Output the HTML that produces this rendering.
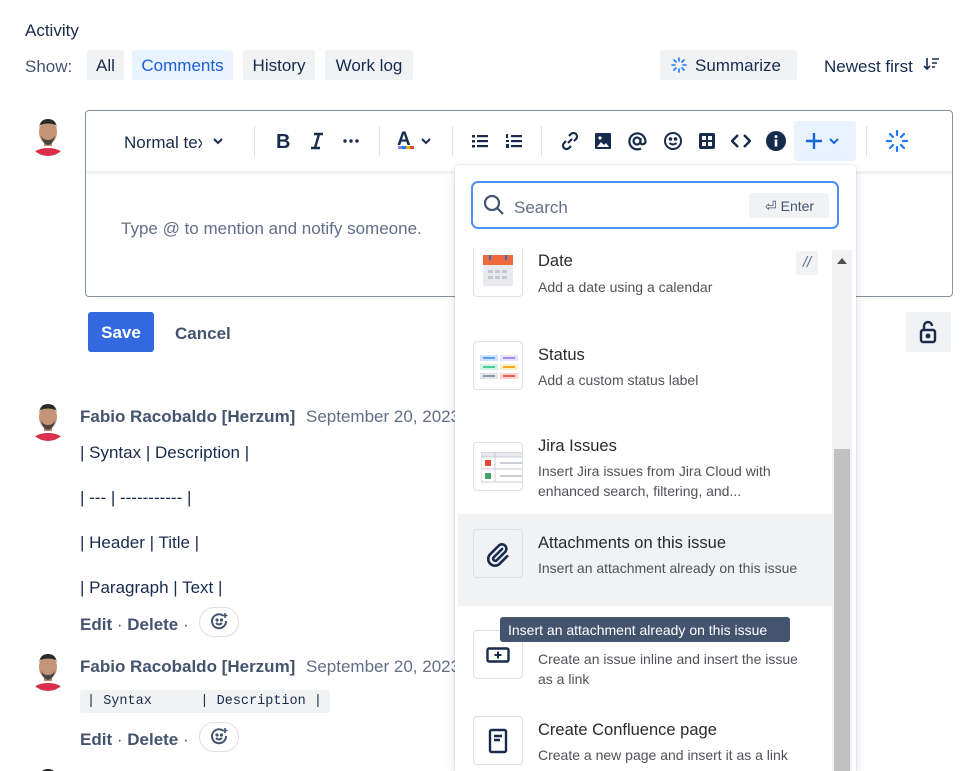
<!DOCTYPE html>
<html><head><meta charset="utf-8"><style>
*{margin:0;padding:0;box-sizing:border-box}
html,body{width:968px;height:771px;overflow:hidden}
body{background:#fff;font-family:"Liberation Sans",sans-serif;color:#172b4d;position:relative}
.a{position:absolute;white-space:nowrap;margin-top:2px}
.btn{position:absolute;height:30px;top:50px;background:#f1f2f4;border-radius:3px;font-size:17px;line-height:32px;text-align:center;color:#172b4d}
.ic{position:absolute}
.sep{position:absolute;width:1px;background:#dcdfe4;top:126px;height:30px}
.itemic{position:absolute;left:473px;width:50px;height:49px;border:1px solid #dcdfe4;border-radius:4px;background:#fff}
.t{position:absolute;left:538px;font-size:16.5px;color:#292a2e;white-space:nowrap;margin-top:2px}
.d{position:absolute;left:538px;font-size:14px;color:#505258;line-height:20px;margin-top:1px}
.txt{position:absolute;left:80px;font-size:17px;color:#172b4d;white-space:nowrap;margin-top:2px}
</style></head><body>
<svg width="0" height="0" style="position:absolute"><defs>
<g id="av"><clipPath id="cc"><circle cx="16" cy="20" r="20"/></clipPath>
<g clip-path="url(#cc)"><rect x="-6" y="-2" width="44" height="44" fill="#fff"/>
<ellipse cx="16" cy="40" rx="16" ry="8" fill="#d8304a"/>
<rect x="12" y="22" width="8" height="8" fill="#b98a6e"/>
<ellipse cx="16" cy="16" rx="9" ry="12" fill="#c49479"/>
<path d="M7 12 Q8 3 16 3 Q24 3 25 12 L24 9 Q16 6 8 9Z" fill="#2b2b2b"/>
<path d="M9 18 Q10 28 16 29 Q22 28 23 18 Q22 24 16 24 Q10 24 9 18Z" fill="#4a4540"/>
</g></g></defs></svg>

<div class="a" style="left:25px;top:19px;font-size:17px">Activity</div>
<div class="a" style="left:25px;top:55px;font-size:17px;color:#44546f">Show:</div>
<div class="btn" style="left:87px;width:37px">All</div>
<div class="btn" style="left:132px;width:101px;background:#e9f2ff;color:#1d5ed9">Comments</div>
<div class="btn" style="left:243px;width:72px">History</div>
<div class="btn" style="left:325px;width:88px">Work log</div>
<div class="btn" style="left:660px;width:137px;text-align:left;padding-left:35px">Summarize</div>
<svg class="ic" style="left:671px;top:57px" width="16" height="16" viewBox="0 0 16 16" stroke="#1d7afc" stroke-width="1.6" stroke-linecap="round"><path d="M8 1v3M8 12v3M1 8h3M12 8h3M3 3l2 2M11 11l2 2M13 3l-2 2M5 11l-2 2"/></svg>
<div class="a" style="left:824px;top:55px;font-size:17px">Newest first</div>
<svg class="ic" style="left:923px;top:56px" width="18" height="16" viewBox="0 0 18 16" stroke="#172b4d" stroke-width="1.6" fill="none"><path d="M4 2v11M1 10l3 3 3-3M9 3h7M9 7h5M9 11h3"/></svg>

<svg class="ic" style="left:32px;top:116px" width="32" height="40"><use href="#av"/></svg>

<div style="position:absolute;left:85px;top:110px;width:868px;height:187px;border:1px solid #8590a2;border-radius:4px"></div>
<div style="position:absolute;left:86px;top:171px;width:866px;height:3px;background:#f1f2f4"></div>
<div class="a" style="left:124px;top:131px;font-size:17px">Normal te<span style="display:inline-block;width:4px;overflow:hidden;vertical-align:bottom">x</span></div>
<svg class="ic" style="left:212px;top:136px" width="12" height="10" viewBox="0 0 12 10"><path d="M2 3l4 4 4-4" stroke="#172b4d" stroke-width="2" fill="none"/></svg>
<div class="sep" style="left:254px"></div>
<div class="a" style="left:276px;top:129px;font-size:20px;font-weight:bold">B</div>
<svg class="ic" style="left:309px;top:132px" width="16" height="18" viewBox="0 0 16 18" stroke="#172b4d" stroke-width="2.4" fill="none"><path d="M5 2h9M2 16h9M10 2L6 16"/></svg>
<svg class="ic" style="left:343px;top:139px" width="16" height="4" viewBox="0 0 16 4" fill="#172b4d"><circle cx="2" cy="2" r="1.7"/><circle cx="8" cy="2" r="1.7"/><circle cx="14" cy="2" r="1.7"/></svg>
<div class="sep" style="left:379px"></div>
<div class="a" style="left:397px;top:127px;font-size:19px;font-weight:bold">A</div>
<div style="position:absolute;left:398px;top:146px;width:16px;height:3px;background:linear-gradient(90deg,#8f7ee7 25%,#1d7afc 25% 50%,#e2b203 50% 75%,#e34935 75%)"></div>
<svg class="ic" style="left:420px;top:136px" width="12" height="10" viewBox="0 0 12 10"><path d="M2 3l4 4 4-4" stroke="#172b4d" stroke-width="2" fill="none"/></svg>
<div class="sep" style="left:452px"></div>
<svg class="ic" style="left:471px;top:133px" width="18" height="16" viewBox="0 0 18 16" fill="#172b4d"><rect x="1" y="2" width="3" height="2.5"/><rect x="1" y="7" width="3" height="2.5"/><rect x="1" y="12" width="3" height="2.5"/><rect x="6" y="2" width="11" height="2.2"/><rect x="6" y="7" width="11" height="2.2"/><rect x="6" y="12" width="11" height="2.2"/></svg>
<svg class="ic" style="left:505px;top:133px" width="18" height="16" viewBox="0 0 18 16" fill="#172b4d"><rect x="1" y="1" width="2" height="4"/><rect x="1" y="7" width="3" height="2"/><rect x="1" y="11" width="3" height="4"/><rect x="6" y="2" width="11" height="2.2"/><rect x="6" y="7" width="11" height="2.2"/><rect x="6" y="12" width="11" height="2.2"/></svg>
<div class="sep" style="left:541px"></div>
<svg class="ic" style="left:560px;top:131px" width="20" height="20" viewBox="0 0 20 20" stroke="#172b4d" stroke-width="2.2" fill="none"><path d="M8 12l4-4M9 5l2-2a3.5 3.5 0 015 5l-2 2M11 15l-2 2a3.5 3.5 0 01-5-5l2-2"/></svg>
<svg class="ic" style="left:595px;top:133px" width="16" height="16" viewBox="0 0 16 16"><rect width="16" height="16" rx="1" fill="#172b4d"/><path d="M2 14l4-5 3 3 2-2 3 4z" fill="#fff"/><circle cx="5" cy="5" r="1.6" fill="#fff"/></svg>
<svg class="ic" style="left:627px;top:131px" width="20" height="20" viewBox="0 0 20 20" fill="none" stroke="#172b4d" stroke-width="2.2"><circle cx="10" cy="10" r="3.5"/><path d="M13.5 7v4q0 3 3 2t1.5-5A8 8 0 1014 17.5"/></svg>
<svg class="ic" style="left:663px;top:131px" width="20" height="20" viewBox="0 0 20 20" fill="none" stroke="#172b4d" stroke-width="2"><circle cx="10" cy="10" r="8"/><path d="M6.5 12q3.5 3 7 0"/><circle cx="7.5" cy="8" r=".8" fill="#172b4d"/><circle cx="12.5" cy="8" r=".8" fill="#172b4d"/></svg>
<svg class="ic" style="left:699px;top:133px" width="16" height="16" viewBox="0 0 16 16"><rect width="16" height="16" rx="2" fill="#172b4d"/><rect x="3" y="3" width="4" height="4" fill="#fff"/><rect x="9" y="3" width="4" height="4" fill="#fff"/><rect x="3" y="9" width="4" height="4" fill="#fff"/><rect x="9" y="9" width="4" height="4" fill="#fff"/></svg>
<svg class="ic" style="left:731px;top:133px" width="20" height="16" viewBox="0 0 20 16" stroke="#172b4d" stroke-width="2.4" fill="none"><path d="M7 2L1 8l6 6M13 2l6 6-6 6"/></svg>
<svg class="ic" style="left:766px;top:131px" width="20" height="20" viewBox="0 0 20 20"><circle cx="10" cy="10" r="10" fill="#172b4d"/><rect x="8.7" y="8.5" width="2.6" height="7" fill="#fff"/><circle cx="10" cy="5.6" r="1.5" fill="#fff"/></svg>
<div style="position:absolute;left:794px;top:121px;width:62px;height:40px;background:#e9f2ff;border-radius:3px"></div>
<svg class="ic" style="left:805px;top:132px" width="18" height="18" viewBox="0 0 18 18" stroke="#1868db" stroke-width="2.4"><path d="M9 1v16M1 9h16"/></svg>
<svg class="ic" style="left:828px;top:136px" width="12" height="10" viewBox="0 0 12 10"><path d="M2 3l4 4 4-4" stroke="#1868db" stroke-width="2" fill="none"/></svg>
<div class="sep" style="left:866px"></div>
<svg class="ic" style="left:885px;top:129px" width="24" height="24" viewBox="0 0 24 24" stroke="#1d7afc" stroke-width="2.2" stroke-linecap="round"><path d="M12 2v4M12 18v4M2 12h4M18 12h4M5 5l3 3M16 16l3 3M19 5l-3 3M8 16l-3 3"/></svg>

<div class="a" style="left:121px;top:217px;font-size:17px;color:#626f86">Type @ to mention and notify someone.</div>

<div style="position:absolute;left:88px;top:312px;width:66px;height:40px;background:#3468e0;border-radius:3px;color:#fff;font-weight:bold;font-size:17px;line-height:42px;text-align:center">Save</div>
<div class="a" style="left:175px;top:322px;font-size:17px;font-weight:bold;color:#44546f">Cancel</div>
<div style="position:absolute;left:906px;top:312px;width:45px;height:40px;background:#f1f2f4;border-radius:3px"></div>
<svg class="ic" style="left:918px;top:319px" width="20" height="26" viewBox="0 0 20 26" fill="none" stroke="#172b4d" stroke-width="2.4"><path d="M6 11V7a4 4 0 018 0"/><rect x="3" y="11" width="14" height="12" rx="2"/><circle cx="10" cy="17" r="1.3" fill="#172b4d"/></svg>

<svg class="ic" style="left:32px;top:401px" width="32" height="40"><use href="#av"/></svg>
<div class="a" style="left:80px;top:405px;font-size:17px;font-weight:bold;color:#44546f">Fabio Racobaldo [Herzum]</div>
<div class="a" style="left:306px;top:405px;font-size:17px;color:#626f86">September 20, 2023</div>
<div class="txt" style="top:441px">| Syntax | Description |</div>
<div class="txt" style="top:486px">| --- | ----------- |</div>
<div class="txt" style="top:531px">| Header | Title |</div>
<div class="txt" style="top:576px">| Paragraph | Text |</div>
<div class="a" style="left:80px;top:613px;font-size:17px;font-weight:bold;color:#44546f">Edit <span style="font-weight:normal">·</span> Delete <span style="font-weight:normal">·</span></div>
<div style="position:absolute;left:199px;top:607px;width:40px;height:30px;border:1px solid #dcdfe4;border-radius:15px"></div>
<svg class="ic" style="left:211px;top:613px" width="17" height="17" viewBox="0 0 17 17" fill="none" stroke="#44546f" stroke-width="2"><path d="M12 2.5A7 7 0 1015 8"/><path d="M5 10q3 3 6 0"/><circle cx="6" cy="7" r=".6" fill="#44546f"/><circle cx="10.5" cy="7" r=".6" fill="#44546f"/><path d="M14 0v5M11.5 2.5h5" stroke-width="1.6"/></svg>

<svg class="ic" style="left:32px;top:651px" width="32" height="40"><use href="#av"/></svg>
<div class="a" style="left:80px;top:655px;font-size:17px;font-weight:bold;color:#44546f">Fabio Racobaldo [Herzum]</div>
<div class="a" style="left:306px;top:655px;font-size:17px;color:#626f86">September 20, 2023</div>
<div style="position:absolute;left:80px;top:690px;width:250px;height:23px;background:#f1f2f4;border-radius:3px;font-family:'Liberation Mono',monospace;font-size:13.5px;line-height:24px;padding-left:7px;white-space:pre;color:#172b4d">| Syntax      | Description |</div>
<div class="a" style="left:80px;top:728px;font-size:17px;font-weight:bold;color:#44546f">Edit <span style="font-weight:normal">·</span> Delete <span style="font-weight:normal">·</span></div>
<div style="position:absolute;left:199px;top:722px;width:40px;height:30px;border:1px solid #dcdfe4;border-radius:15px"></div>
<svg class="ic" style="left:211px;top:728px" width="17" height="17" viewBox="0 0 17 17" fill="none" stroke="#44546f" stroke-width="2"><path d="M12 2.5A7 7 0 1015 8"/><path d="M5 10q3 3 6 0"/><circle cx="6" cy="7" r=".6" fill="#44546f"/><circle cx="10.5" cy="7" r=".6" fill="#44546f"/><path d="M14 0v5M11.5 2.5h5" stroke-width="1.6"/></svg>
<svg class="ic" style="left:32px;top:766px;overflow:hidden" width="32" height="5" viewBox="0 0 32 5"><use href="#av"/></svg>

<div style="position:absolute;left:455px;top:165px;width:401px;height:606px;background:#fff;border-radius:4px 4px 0 0;box-shadow:0 0 1px rgba(9,30,66,.3),0 4px 10px rgba(9,30,66,.15)"></div>
<div style="position:absolute;left:471px;top:181px;width:368px;height:48px;border:2px solid #4c8ff5;border-radius:7px"></div>
<svg class="ic" style="left:483px;top:194px" width="22" height="22" viewBox="0 0 22 22" fill="none" stroke="#44546f" stroke-width="2.2"><circle cx="9" cy="9" r="7"/><path d="M14 14l6 6"/></svg>
<div class="a" style="left:514px;top:196px;font-size:17px;color:#626f86">Search</div>
<div style="position:absolute;left:749px;top:193px;width:80px;height:25px;background:#f1f2f4;border-radius:3px;font-size:14px;line-height:26px;color:#44546f;padding-left:16px">⏎ Enter</div>

<div style="position:absolute;left:457px;top:250px;width:396px;height:521px;overflow:hidden">
 <div style="position:absolute;left:375px;top:0;width:20px;height:521px;background:#f1f1f1"></div>
 <div style="position:absolute;left:377px;top:199px;width:16px;height:330px;background:#c1c1c1"></div>
 <svg class="ic" style="left:380px;top:8px" width="10" height="6"><path d="M0 6L5 0 10 6z" fill="#505050"/></svg>
 <div style="position:absolute;left:1px;top:264px;width:374px;height:92px;background:#f1f2f4"></div>
</div>

<div class="itemic" style="top:248px;height:49px;border-top:none;border-radius:0 0 4px 4px"></div>
<svg class="ic" style="left:483px;top:255px" width="30" height="32" viewBox="0 0 30 32"><rect x="0" y="0" width="30" height="31" rx="2" fill="#e9eaee"/><rect x="0" y="0" width="30" height="10" fill="#f06a3c"/><rect x="6" y="-2" width="2" height="7" fill="#2b6fe0"/><rect x="22" y="-2" width="2" height="7" fill="#2b6fe0"/><g fill="#c5c8d0"><rect x="5" y="15" width="5" height="3"/><rect x="12" y="15" width="5" height="3"/><rect x="19" y="15" width="5" height="3"/><rect x="5" y="21" width="5" height="3"/><rect x="12" y="21" width="5" height="3"/><rect x="19" y="21" width="5" height="3"/></g></svg>
<div class="t" style="top:250px">Date</div>
<div class="d" style="top:276px">Add a date using a calendar</div>
<div style="position:absolute;left:796px;top:251px;width:22px;height:24px;background:#f1f2f4;border-radius:3px;font-size:15px;font-style:italic;color:#626f86;text-align:center;line-height:24px">//</div>

<div class="itemic" style="top:341px"></div>
<svg class="ic" style="left:480px;top:355px" width="38" height="24" viewBox="0 0 38 24"><rect x="0" y="0" width="18" height="6" fill="#cfe1fd"/><rect x="3" y="2" width="12" height="2" fill="#579dff"/><rect x="20" y="0" width="18" height="6" fill="#e9e2ff"/><rect x="23" y="2" width="12" height="2" fill="#9f8fef"/><rect x="0" y="9" width="18" height="6" fill="#d3f1e4"/><rect x="3" y="11" width="12" height="2" fill="#4bce97"/><rect x="20" y="9" width="18" height="6" fill="#fff1c7"/><rect x="23" y="11" width="12" height="2" fill="#f5a623"/><rect x="0" y="18" width="18" height="6" fill="#e3e4e8"/><rect x="3" y="20" width="12" height="2" fill="#8c9bab"/><rect x="20" y="18" width="18" height="6" fill="#ffd5d2"/><rect x="23" y="20" width="12" height="2" fill="#f15b50"/></svg>
<div class="t" style="top:344px">Status</div>
<div class="d" style="top:369px">Add a custom status label</div>

<div class="itemic" style="top:442px;overflow:hidden"><svg width="50" height="49" style="position:absolute;left:7px;top:9px" viewBox="0 0 50 49"><rect x="0" y="0" width="50" height="30" fill="#fff" stroke="#c8ccd4"/><rect x="0" y="0" width="50" height="5" fill="#e8e9ec" stroke="#c8ccd4"/><path d="M14 0v30M0 17h50" stroke="#c8ccd4"/><rect x="4" y="8" width="6" height="6" fill="#e34935"/><rect x="4" y="21" width="6" height="6" fill="#3fa36a"/><path d="M19 11h30M19 24h30" stroke="#c8ccd4" stroke-width="2"/></svg></div>
<div class="t" style="top:435px">Jira Issues</div>
<div class="d" style="top:460px">Insert Jira issues from Jira Cloud with<br>enhanced search, filtering, and...</div>

<div class="itemic" style="top:529px;background:#f1f2f4"></div>
<svg class="ic" style="left:485px;top:541px" width="26" height="26" viewBox="0 0 26 26" fill="none" stroke="#172b4d" stroke-width="2.6" stroke-linecap="round"><path d="M17 8l-8.5 8.5a2.2 2.2 0 003 3l9-9a4.5 4.5 0 00-6.3-6.3l-9 9a6.7 6.7 0 009.5 9.5l7.5-7.5"/></svg>
<div class="t" style="top:532px">Attachments on this issue</div>
<div class="d" style="top:557px">Insert an attachment already on this issue</div>

<div class="itemic" style="top:630px"></div>
<svg class="ic" style="left:486px;top:647px" width="24" height="16" viewBox="0 0 24 16" fill="none" stroke="#172b4d" stroke-width="2.4"><rect x="1.5" y="1.5" width="21" height="13" rx="1.5"/><path d="M12 4.5v7M8.5 8h7" stroke-width="2"/></svg>
<div class="d" style="top:648px">Create an issue inline and insert the issue<br>as a link</div>

<div class="itemic" style="top:716px"></div>
<svg class="ic" style="left:488px;top:728px" width="20" height="26" viewBox="0 0 20 26" fill="none" stroke="#172b4d" stroke-width="2.4"><rect x="2" y="2" width="16" height="22" rx="1.5"/><path d="M6 8h8M6 12h6"/></svg>
<div class="t" style="top:719px">Create Confluence page</div>
<div class="d" style="top:744px">Create a new page and insert it as a link</div>

<div style="position:absolute;left:500px;top:617px;width:290px;height:25px;background:#44546f;border-radius:3px;color:#fff;font-size:14px;line-height:26px;padding-left:8px;white-space:nowrap">Insert an attachment already on this issue</div>
</body></html>
